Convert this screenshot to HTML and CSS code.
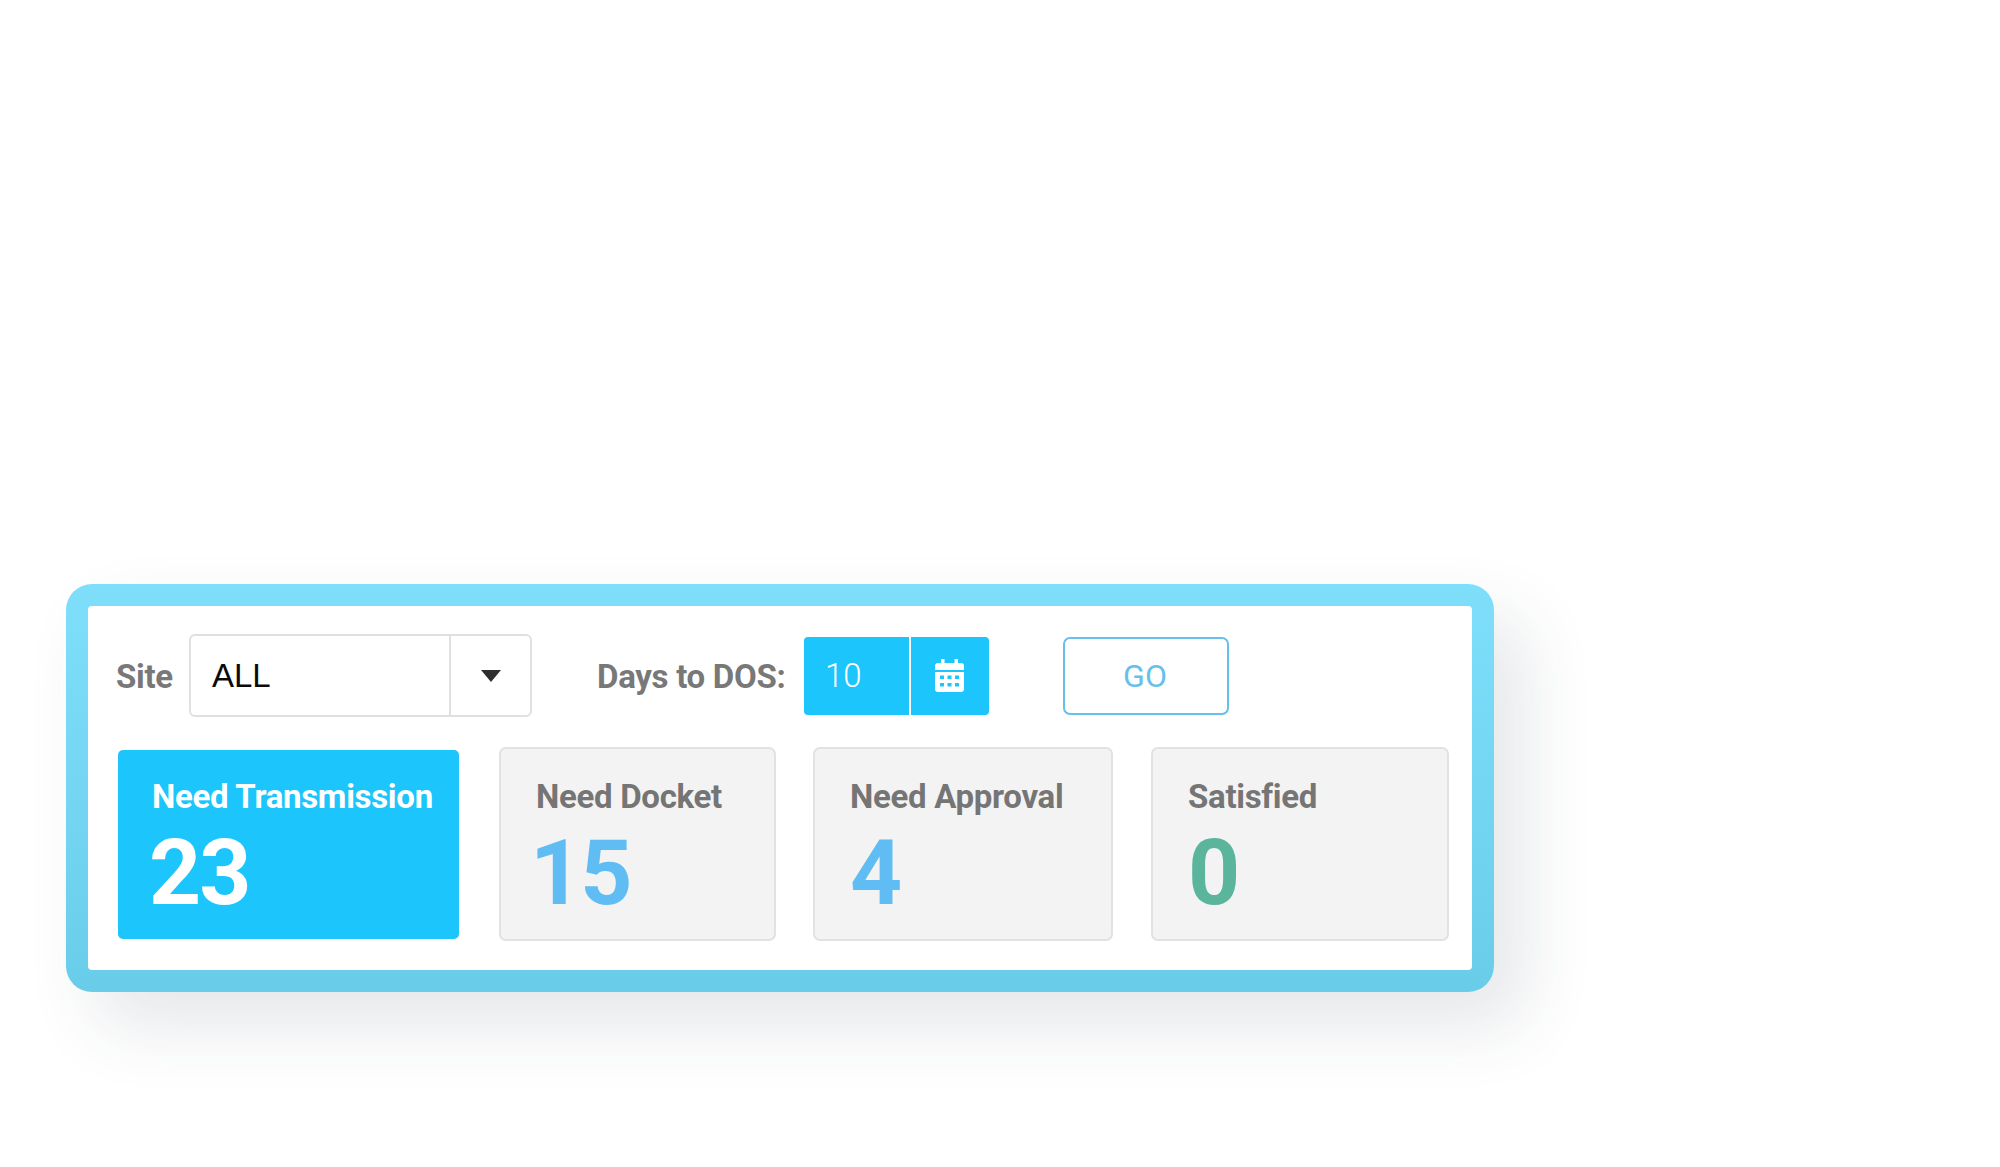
FILE: index.html
```html
<!DOCTYPE html>
<html lang="en">
<head>
<meta charset="utf-8">
<title>Worklist filter</title>
<link rel="stylesheet" href="styles.css">
</head>
<body>
<main class="frame">
  <section class="panel">
    <div class="toolbar">
      <span class="label site-label">Site</span>
      <div class="select">
        <span class="select-value">ALL</span>
        <span class="select-toggle"><svg class="caret" viewBox="0 0 20 12"><path d="M0 0H20L10 12Z"/></svg></span>
      </div>
      <span class="label days-label">Days to DOS:</span>
      <div class="days">
        <span class="days-value">10</span>
        <span class="days-icon">
          <svg class="cal" viewBox="0 0 29 33"><path fill-rule="evenodd" d="M6 0h3.500v4h10V0H23v4h3a3 3 0 0 1 3 3v4H0V7a3 3 0 0 1 3-3h3zM0 13h29v17a3 3 0 0 1-3 3H3a3 3 0 0 1-3-3zm5 3.500v3.500h4v-3.500zm7.500 0v3.500h4v-3.500zm7.500 0v3.500h4v-3.500zM5 24v3.500h4V24zm7.500 0v3.500h4V24zm7.500 0v3.500h4V24z"/></svg>
        </span>
      </div>
      <button class="go">GO</button>
    </div>
    <div class="cards">
      <article class="card card-active card-a"><h2>Need Transmission</h2><p class="num num-a">23</p></article>
      <article class="card card-b"><h2>Need Docket</h2><p class="num num-b blue">15</p></article>
      <article class="card card-c"><h2>Need Approval</h2><p class="num blue">4</p></article>
      <article class="card card-d"><h2>Satisfied</h2><p class="num green">0</p></article>
    </div>
  </section>
</main>
</body>
</html>
```
FILE: styles.css
```css
* { box-sizing: border-box; }
html, body { margin: 0; height: 100%; background: #fff; overflow: hidden; }
body { padding: 584px 0 0 66px; font-family: Roboto, "Liberation Sans", sans-serif; }

.frame {
  width: 1428px;
  height: 408px;
  padding: 22px;
  border-radius: 26px;
  background: linear-gradient(180deg, #7fdffb 0%, #69cdea 100%);
  box-shadow: 30px 34px 70px rgba(40, 60, 70, .12);
}
.panel {
  height: 100%;
  padding: 28px 22px 0 28px;
  border-radius: 4px;
  background: #fff;
}

.toolbar { display: flex; align-items: center; height: 83px; }
.label { padding-top: 1px; font-size: 33px; font-weight: 700; color: #787878; letter-spacing: -.3px; }
.site-label { width: 73px; }
.select {
  display: flex;
  width: 343px;
  height: 83px;
  border: 2px solid #e0e0e0;
  border-radius: 6px;
}
.select-value {
  flex: 1;
  padding-left: 21px;
  font: 33px/79px "Liberation Sans", sans-serif;
  color: #0a0a0a;
}
.select-toggle {
  display: flex;
  width: 81px;
  align-items: center;
  justify-content: center;
  border-left: 2px solid #e0e0e0;
}
.caret { width: 20px; height: 12px; fill: #2e2e2e; }
.days-label { margin-left: 65px; width: 207px; }
.days {
  display: flex;
  width: 185px;
  height: 78px;
  border-radius: 4px;
  overflow: hidden;
  background: #1cc5fb;
  color: #fff;
}
.days-value {
  width: 107px;
  padding-left: 21px;
  border-right: 2px solid #fff;
  font-size: 33px;
  font-weight: 300;
  line-height: 78px;
}
.days-icon { flex: 1; display: flex; align-items: center; justify-content: center; padding-right: 1px; }
.cal { width: 29px; height: 33px; fill: #fff; }
.go {
  width: 166px;
  height: 78px;
  margin-left: 74px;
  padding: 0 2px 0 0;
  border: 2px solid #67bfec;
  border-radius: 7px;
  background: #fff;
  color: #67bfec;
  font: 400 32px Roboto, sans-serif;
}

.cards { display: flex; align-items: center; margin-top: 30px; }
.card {
  height: 194px;
  padding: 26px 0 0 35px;
  border: 2px solid #e2e2e2;
  border-radius: 7px;
  background: #f3f3f3;
}
.card h2 { margin: 0; font-size: 33px; line-height: 44px; font-weight: 700; color: #757575; letter-spacing: -.3px; white-space: nowrap; }
.num { margin: 8px 0 0; font-size: 91px; line-height: 92px; font-weight: 700; letter-spacing: -2px; }
.num-a { margin: 8px 0 0 -3px; }
.num-b { margin-left: -6px; }
.blue { color: #5fbdf3; }
.green { color: #5ab59c; }
.card-active {
  height: 189px;
  border: 0;
  border-radius: 5px;
  background: #1cc5fb;
  padding: 25px 0 0 34px;
}
.card-active h2, .card-active .num { color: #fff; }
.card-a { width: 341px; margin-left: 2px; }
.card-b { width: 277px; margin-left: 40px; }
.card-c { width: 300px; margin-left: 37px; }
.card-d { width: 298px; margin-left: 38px; }
```
